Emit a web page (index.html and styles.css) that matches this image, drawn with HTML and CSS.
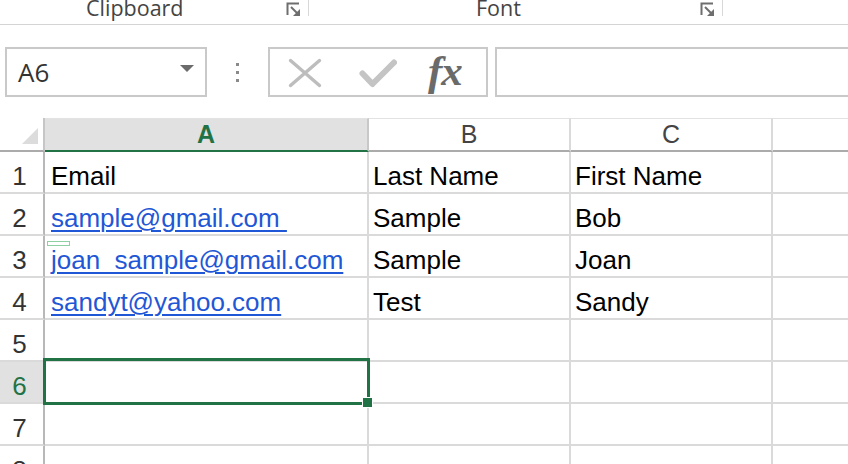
FILE: index.html
```html
<!DOCTYPE html>
<html>
<head>
<meta charset="utf-8">
<link rel="stylesheet" href="styles.css">
</head>
<body>
<div class="ribbon">
  <div class="rgroup g1">
    <span class="rlabel l1">Clipboard</span>
    <svg class="launcher" width="15" height="14" viewBox="0 0 15 14"><path d="M1.5 13V1.5H13" fill="none" stroke="#6e6e6e" stroke-width="2"/><path d="M5 5L11 11" stroke="#6e6e6e" stroke-width="2"/><path d="M14 14H7L14 7Z" fill="#6e6e6e"/></svg>
  </div>
  <div class="rgroup g2">
    <span class="rlabel l2">Font</span>
    <svg class="launcher" width="15" height="14" viewBox="0 0 15 14"><path d="M1.5 13V1.5H13" fill="none" stroke="#6e6e6e" stroke-width="2"/><path d="M5 5L11 11" stroke="#6e6e6e" stroke-width="2"/><path d="M14 14H7L14 7Z" fill="#6e6e6e"/></svg>
  </div>
</div>

<div class="fbar">
  <div class="namebox">
    <span class="nameval">A6</span>
    <span class="dropdown"></span>
  </div>
  <div class="dots"><i></i><i></i><i></i></div>
  <div class="fxbox">
    <svg class="xicon" width="34" height="30" viewBox="0 0 34 30"><path d="M2.5 2.5L31.5 27.5M31.5 2.5L2.5 27.5" stroke="#bdbdbd" stroke-width="3.4" stroke-linecap="round"/></svg>
    <svg class="check" width="38" height="29" viewBox="0 0 38 29"><path d="M3.5 14.5L13.5 25L35 3.5" fill="none" stroke="#c4c4c4" stroke-width="6" stroke-linecap="round" stroke-linejoin="round"/></svg>
    <span class="fx">fx</span>
  </div>
  <div class="finput"></div>
</div>

<div class="sheet">
  <div class="grid">
    <div class="corner"><span class="tri"></span></div>
    <div class="ch sel">A</div>
    <div class="ch">B</div>
    <div class="ch">C</div>
    <div class="ch last"></div>

    <div class="rh">1</div>
    <div class="c">Email</div>
    <div class="c">Last Name</div>
    <div class="c">First Name</div>
    <div class="c last"></div>

    <div class="rh">2</div>
    <div class="c"><span class="link">sample@gmail.com </span></div>
    <div class="c">Sample</div>
    <div class="c">Bob</div>
    <div class="c last"></div>

    <div class="rh">3</div>
    <div class="c"><span class="link">joan_sample@gmail.com</span></div>
    <div class="c">Sample</div>
    <div class="c">Joan</div>
    <div class="c last"></div>

    <div class="rh">4</div>
    <div class="c"><span class="link">sandyt@yahoo.com</span></div>
    <div class="c">Test</div>
    <div class="c">Sandy</div>
    <div class="c last"></div>

    <div class="rh">5</div>
    <div class="c"></div>
    <div class="c"></div>
    <div class="c"></div>
    <div class="c last"></div>

    <div class="rh rsel">6</div>
    <div class="c"></div>
    <div class="c"></div>
    <div class="c"></div>
    <div class="c last"></div>

    <div class="rh">7</div>
    <div class="c"></div>
    <div class="c"></div>
    <div class="c"></div>
    <div class="c last"></div>

    <div class="rh">8</div>
    <div class="c"></div>
    <div class="c"></div>
    <div class="c"></div>
    <div class="c last"></div>
  </div>
  <div class="marker"></div>
  <div class="selection"><span class="handle"></span></div>
</div>
</body>
</html>
```

FILE: styles.css
```css
html, body {
  margin: 0;
  padding: 0;
  background: #ffffff;
}
body {
  width: 848px;
  height: 464px;
  overflow: hidden;
  font-family: "Liberation Sans", Arial, sans-serif;
}

/* ribbon */
.ribbon {
  display: flex;
  height: 24px;
  border-bottom: 1px solid #d4d4d4;
}
.rgroup {
  display: flex;
  align-items: flex-start;
  height: 16px;
  border-right: 1px solid #d8d8d8;
  box-sizing: border-box;
}
.g1 { width: 309px; }
.g2 { width: 414px; }
.rlabel {
  font-family: "Open Sans", "Noto Sans", sans-serif;
  font-size: 21.5px;
  line-height: 16px;
  color: #444444;
  white-space: nowrap;
}
.l1 { margin-left: 86px; }
.l2 { margin-left: 167px; }
.launcher {
  margin-left: auto;
  margin-right: 7px;
  margin-top: 2px;
}

/* formula bar */
.fbar {
  display: flex;
  height: 50px;
  margin-top: 22px;
  padding-left: 5px;
}
.namebox {
  width: 202px;
  height: 50px;
  box-sizing: border-box;
  border: 2px solid #c9c9c9;
  display: flex;
  align-items: center;
}
.nameval {
  font-family: "Open Sans", "Noto Sans", sans-serif;
  font-size: 26px;
  line-height: 46px;
  color: #333333;
  margin-left: 11px;
}
.dropdown {
  margin-left: auto;
  margin-right: 11px;
  margin-top: -7px;
  width: 0;
  height: 0;
  border-left: 7.5px solid transparent;
  border-right: 7.5px solid transparent;
  border-top: 7px solid #6b6b6b;
}
.dots {
  width: 61px;
  display: flex;
  flex-direction: column;
  align-items: center;
  justify-content: center;
  gap: 5px;
}
.dots i {
  display: block;
  width: 3px;
  height: 3px;
  background: #8a8a8a;
}
.fxbox {
  width: 220px;
  height: 50px;
  box-sizing: border-box;
  border: 2px solid #c9c9c9;
  display: flex;
  align-items: center;
  padding-left: 18px;
}
.xicon { margin-top: 1px; }
.check { margin-left: 37px; margin-top: 2px; }
.fx {
  margin-left: 31px;
  font-family: "Liberation Serif", "Times New Roman", serif;
  font-style: italic;
  font-weight: bold;
  font-size: 43px;
  line-height: 44px;
  color: #6a6a6a;
  margin-top: -2px;
  letter-spacing: -1px;
}
.finput {
  flex: 1;
  margin-left: 7px;
  margin-right: -10px;
  height: 50px;
  box-sizing: border-box;
  border: 2px solid #c9c9c9;
}

/* sheet */
.sheet {
  position: relative;
  margin-top: 21px;
}
.grid {
  display: grid;
  grid-template-columns: 45px 324px 202px 202px 1fr;
  grid-template-rows: 34px repeat(8, 42px);
}
.grid > div {
  box-sizing: border-box;
  white-space: nowrap;
  overflow: hidden;
}
.corner {
  position: relative;
  border-right: 2px solid #c6c6c6;
  border-bottom: 2px solid #ababab;
}
.tri {
  position: absolute;
  left: 22px;
  top: 10px;
  width: 0;
  height: 0;
  border-left: 16px solid transparent;
  border-bottom: 16px solid #dcdcdc;
}
.ch {
  border-top: 1px solid #e2e2e2;
  border-right: 2px solid #dadada;
  border-bottom: 2px solid #ababab;
  text-align: center;
  font-size: 25px;
  line-height: 31px;
  color: #444444;
}
.ch.sel {
  background: #e1e1e1;
  color: #217346;
  font-weight: bold;
  border-bottom-color: #217346;
  border-right-color: #c8c8c8;
}
.rh {
  border-right: 2px solid #b8b8b8;
  border-bottom: 2px solid #dadada;
  text-align: center;
  padding-right: 4px;
  padding-top: 8px;
  font-size: 26px;
  line-height: 32px;
  color: #333333;
}
.rh.rsel {
  background: #e1e1e1;
  color: #217346;
}
.c {
  border-right: 2px solid #dadada;
  border-bottom: 2px solid #dadada;
  padding-left: 4px;
  padding-top: 8px;
  font-size: 26px;
  line-height: 32px;
  color: #000000;
}
.c:nth-child(5n+2) { padding-left: 6px; }
.c.last, .ch.last { border-right: none; }
.link {
  color: #1f57d6;
  text-decoration: underline;
  text-decoration-thickness: 2px;
  text-underline-offset: 3px;
  white-space: pre;
}

/* overlays */
.marker {
  position: absolute;
  left: 47px;
  top: 123px;
  width: 23px;
  height: 5px;
  box-sizing: border-box;
  border: 1px solid #8fd0a2;
}
.selection {
  position: absolute;
  left: 43px;
  top: 240px;
  width: 327px;
  height: 47px;
  box-sizing: border-box;
  border: 3px solid #217346;
}
.handle {
  position: absolute;
  right: -6px;
  bottom: -6px;
  width: 9px;
  height: 9px;
  background: #217346;
  border: 1px solid #ffffff;
}
```
